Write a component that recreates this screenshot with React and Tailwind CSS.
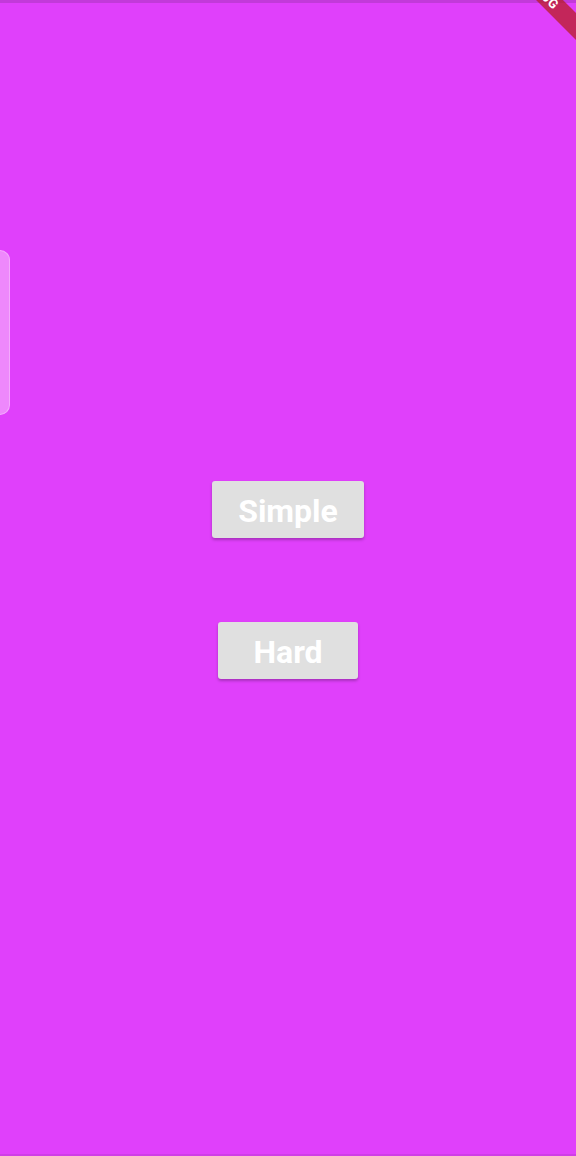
import React from "react";

export default function App() {
  return (
    <div className="relative w-[576px] h-[1156px] overflow-hidden bg-[#e040fb]" style={{ fontFamily: "Roboto, 'Liberation Sans', sans-serif" }}>
      <div className="absolute top-0 left-0 right-0 h-[3px] bg-[#c23ad9]" />
      <div className="absolute bottom-0 left-0 right-0 h-[2px] bg-[#cf3de6]" />
      <div className="absolute top-[250px] left-0 w-[10px] h-[165px] rounded-r-[10px] bg-[#ee88fc] border border-l-0 border-[#f4aafd]" />

      <div className="flex flex-col items-center pt-[481px]">
        <button className="w-[152px] h-[57px] rounded-[3px] bg-[#e0e0e0] text-white font-bold text-[32px] leading-none pt-[2px] shadow-[0_2px_3px_rgba(0,0,0,0.25)]">
          Simple
        </button>
        <button className="mt-[84px] w-[140px] h-[57px] rounded-[3px] bg-[#e0e0e0] text-white font-bold text-[32px] leading-none pt-[2px] shadow-[0_2px_3px_rgba(0,0,0,0.25)]">
          Hard
        </button>
      </div>

      <div className="absolute left-[481px] top-[-18px] w-[120px] h-[19px] rotate-45 bg-[rgba(183,28,28,0.72)] flex items-center justify-center text-white font-bold text-[13px] leading-none tracking-[0.5px]">
        DEBUG
      </div>
    </div>
  );
}
